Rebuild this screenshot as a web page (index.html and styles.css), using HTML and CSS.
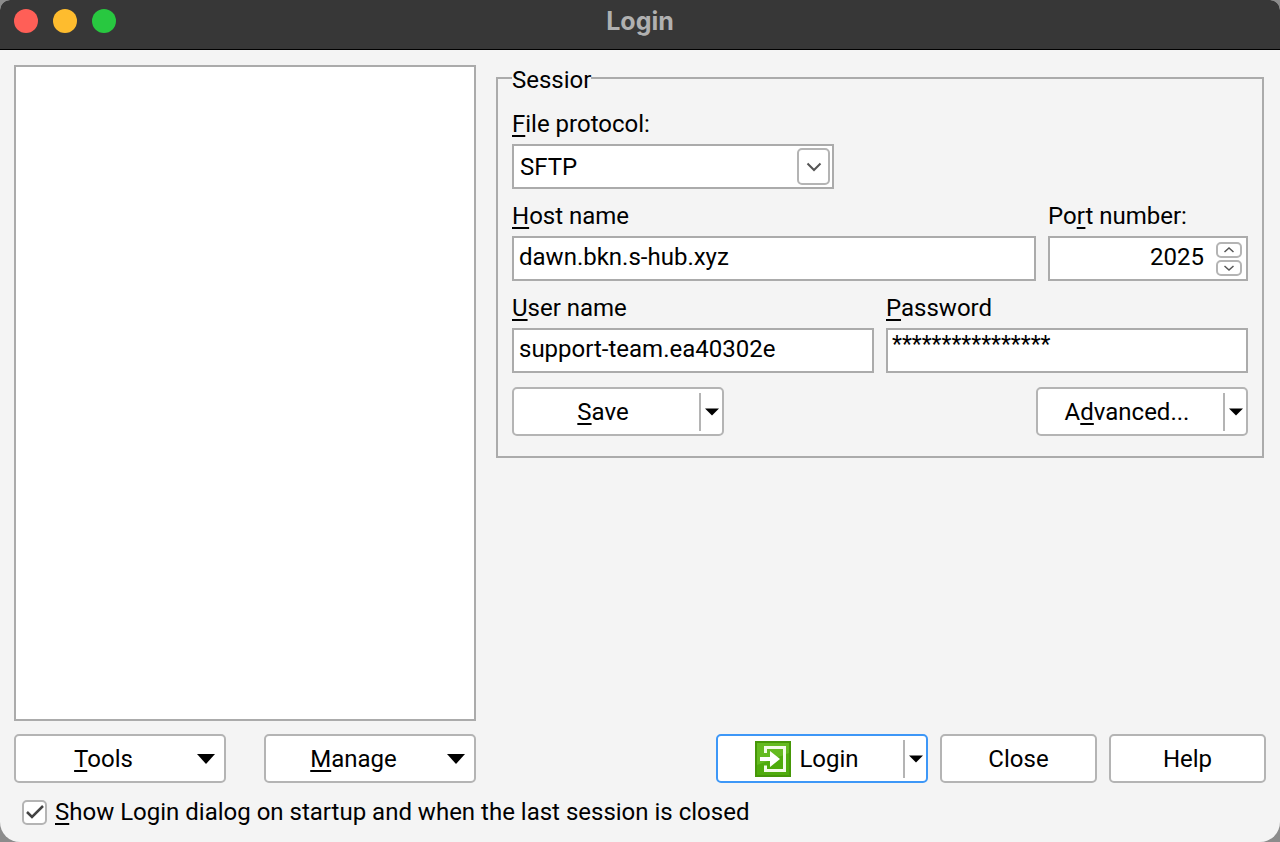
FILE: index.html
```
<!DOCTYPE html>
<html lang="en">
<head>
<meta charset="utf-8">
<title>Login</title>
<link rel="stylesheet" href="styles.css">
</head>
<body>
<div class="window">
  <header class="titlebar">
    <div class="lights">
      <button class="light light-close" aria-label="Close window"></button>
      <button class="light light-min" aria-label="Minimize window"></button>
      <button class="light light-max" aria-label="Maximize window"></button>
    </div>
    <h1 class="title">Login</h1>
  </header>
  <form class="content">
    <div class="panes">
      <div class="sites" role="listbox" aria-label="Sites"></div>
      <fieldset class="session">
        <legend class="legend">Sessior</legend>
        <div class="field protocol">
          <label for="protocol"><span class="key">F</span>ile protocol:</label>
          <div class="select-wrap">
            <select id="protocol" class="box"><option>SFTP</option></select>
            <span class="select-arrow"><svg width="16" height="10" viewBox="0 0 16 10"><path d="M1.500 1.500L8 8L14.500 1.500" fill="none" stroke="#555" stroke-width="2"/></svg></span>
          </div>
        </div>
        <div class="row">
          <div class="field grow">
            <label for="host"><span class="key">H</span>ost name</label>
            <input id="host" class="box" type="text" value="dawn.bkn.s-hub.xyz">
          </div>
          <div class="field port">
            <label for="port">Po<span class="key">r</span>t number:</label>
            <div class="box spin">
              <input id="port" class="spin-input" type="text" value="2025">
              <div class="spin-buttons">
                <button type="button" class="step" aria-label="Increase"><svg width="12" height="8" viewBox="0 0 12 8"><path d="M1.500 6L6 2L10.500 6" fill="none" stroke="#555" stroke-width="1.500"/></svg></button>
                <button type="button" class="step" aria-label="Decrease"><svg width="12" height="8" viewBox="0 0 12 8"><path d="M1.500 2L6 6L10.500 2" fill="none" stroke="#555" stroke-width="1.500"/></svg></button>
              </div>
            </div>
          </div>
        </div>
        <div class="row">
          <div class="field grow">
            <label for="user"><span class="key">U</span>ser name</label>
            <input id="user" class="box" type="text" value="support-team.ea40302e">
          </div>
          <div class="field grow">
            <label for="password"><span class="key">P</span>assword</label>
            <input id="password" class="box masked" type="text" value="****************">
          </div>
        </div>
        <div class="session-actions">
          <div class="split">
            <button type="button" class="split-main"><span><span class="key">S</span>ave</span></button>
            <button type="button" class="split-arrow" aria-label="Save options"><svg width="14" height="8" viewBox="0 0 14 8"><path d="M0 0.500H14L7 7.500Z"/></svg></button>
          </div>
          <div class="split">
            <button type="button" class="split-main"><span>A<span class="key">d</span>vanced...</span></button>
            <button type="button" class="split-arrow" aria-label="Advanced options"><svg width="14" height="8" viewBox="0 0 14 8"><path d="M0 0.500H14L7 7.500Z"/></svg></button>
          </div>
        </div>
      </fieldset>
    </div>
    <div class="bottom">
      <div class="bottom-left">
        <button type="button" class="button menu"><span class="menu-text"><span class="key">T</span>ools</span><svg width="20" height="12" viewBox="0 0 20 12"><path d="M1 1H19L10 11Z"/></svg></button>
        <button type="button" class="button menu"><span class="menu-text"><span class="key">M</span>anage</span><svg width="20" height="12" viewBox="0 0 20 12"><path d="M1 1H19L10 11Z"/></svg></button>
      </div>
      <div class="bottom-right">
        <div class="split split-default">
          <button type="submit" class="split-main">
            <svg width="36" height="36" viewBox="0 0 36 36"><rect x="1" y="1" width="34" height="34" fill="#4fab0c" stroke="#469708" stroke-width="2"/><path d="M2 2H34V12L2 24Z" fill="#64ba20"/><path d="M10.500 12V6.500H29.500V29.500H10.500V24.500" fill="none" stroke="#f4fbe9" stroke-width="3"/><path d="M5 16H15V10L25 18L15 26V20H5Z" fill="#fff"/></svg>
            <span>Login</span>
          </button>
          <button type="button" class="split-arrow" aria-label="Login options"><svg width="14" height="8" viewBox="0 0 14 8"><path d="M0 0.500H14L7 7.500Z"/></svg></button>
        </div>
        <button type="button" class="button">Close</button>
        <button type="button" class="button">Help</button>
      </div>
    </div>
    <div class="startup">
      <input id="startup" class="check" type="checkbox" checked>
      <svg class="tick" width="20" height="16" viewBox="0 0 20 16"><path d="M2 8L7 13L18 2" fill="none" stroke="#444" stroke-width="2.500"/></svg>
      <label for="startup"><span class="key">S</span>how Login dialog on startup and when the last session is closed</label>
    </div>
  </form>
</div>
</body>
</html>
```
FILE: styles.css
```
* { box-sizing: border-box; }
body {
  margin: 0;
  background: #8c8c8c;
  color: #000;
  font: 24px/32px Roboto, "Liberation Sans", sans-serif;
}
button, input, select { font: inherit; color: inherit; }
button { margin: 0; padding: 0; border: 0; background: none; }
svg { display: block; flex: none; }
.window {
  display: flex;
  flex-direction: column;
  min-height: 100vh;
  overflow: hidden;
  border-radius: 10px 10px 20px 20px;
  background: #f4f4f4;
}
.titlebar {
  display: grid;
  grid-template-columns: 1fr auto 1fr;
  align-items: center;
  height: 50px;
  padding: 0 14px 7px;
  border-bottom: 1px solid #000;
  background: #373737;
}
.lights { display: flex; gap: 15px; }
.light { width: 24px; height: 24px; border-radius: 50%; }
.light-close { background: #ff5f57; }
.light-min { background: #febc2e; }
.light-max { background: #28c840; }
.title {
  margin: 0;
  color: #b0b0b0;
  font: 700 25px/32px Inter, "Liberation Sans", sans-serif;
}
.content {
  display: flex;
  flex: 1;
  flex-direction: column;
  padding: 15px 14px 14px;
}
.panes {
  display: grid;
  flex: 1;
  grid-template-columns: 77fr 128fr;
  gap: 20px;
  padding-right: 2px;
}
.sites { border: 2px solid #ababab; background: #fff; }
.session {
  align-self: start;
  min-width: 0;
  margin: 1px 0 0;
  padding: 18px 14px 20px;
  border: 2px solid #ababab;
}
.legend { height: 24px; padding: 0; line-height: 28px; }
.field { display: flex; flex-direction: column; gap: 4px; min-width: 0; }
.key {
  text-decoration: underline;
  text-decoration-thickness: 2px;
  text-underline-offset: 3px;
  text-decoration-skip-ink: none;
}
.row { display: flex; gap: 12px; margin-top: 11px; }
.grow { flex: 1; }
.port { width: 200px; }
.protocol { width: 322px; }
.box {
  width: 100%;
  height: 45px;
  padding: 0 5px 4px;
  border: 2px solid #ababab;
  border-radius: 0;
  outline: 0;
  background: #fff;
}
.masked { padding: 0 4px 12px; font-size: 23px; }
.select-wrap { position: relative; }
select.box { display: block; padding: 0 40px 0 6px; appearance: none; }
.select-arrow {
  position: absolute;
  top: 4px;
  right: 4px;
  bottom: 4px;
  display: grid;
  width: 33px;
  place-items: center;
  border: 2px solid #b4b4b4;
  border-radius: 5px;
  pointer-events: none;
}
.spin { display: flex; align-items: center; gap: 12px; padding: 0 4px 0 0; }
.spin-input {
  flex: 1;
  min-width: 0;
  height: 40px;
  padding: 0 0 4px;
  border: 0;
  outline: 0;
  background: none;
  text-align: right;
}
.spin-buttons { display: grid; gap: 2px; }
.step {
  display: grid;
  width: 26px;
  height: 16px;
  place-items: center;
  border: 2px solid #b4b4b4;
  border-radius: 5px;
}
.session-actions { display: flex; justify-content: space-between; margin-top: 14px; }
.button, .split {
  height: 49px;
  border: 2px solid #b4b4b4;
  border-radius: 5px;
  background: #fff;
}
.button { width: 157px; }
.split { display: flex; align-items: center; width: 212px; }
.split-default { border-color: #3d97f7; }
.split-main {
  display: flex;
  flex: 1;
  align-items: center;
  justify-content: center;
  gap: 8px;
  height: 100%;
  padding-right: 7px;
}
.split-arrow {
  display: grid;
  width: 23px;
  height: 38px;
  place-items: center;
  border-left: 2px solid #b4b4b4;
}
.bottom { display: flex; justify-content: space-between; gap: 20px; margin-top: 13px; }
.bottom-left, .bottom-right { display: flex; gap: 12px; }
.bottom-left { gap: 38px; }
.menu { display: flex; align-items: center; width: 212px; padding-right: 8px; }
.menu-text { flex: 1; padding-right: 5px; }
.startup {
  position: relative;
  display: flex;
  align-items: center;
  gap: 8px;
  margin-top: 13px;
  padding-left: 8px;
}
.check {
  width: 25px;
  height: 25px;
  margin: 0;
  border: 2px solid #b4b4b4;
  border-radius: 5px;
  appearance: none;
  background: #fff;
}
.tick { position: absolute; left: 11px; top: 8px; pointer-events: none; }
```
